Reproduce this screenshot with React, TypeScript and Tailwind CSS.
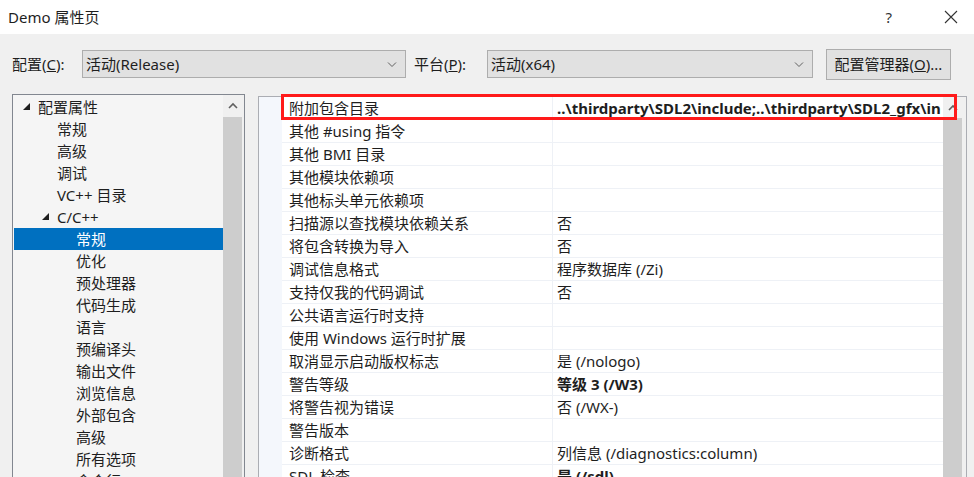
import React from "react";

const font = { fontFamily: '"Noto Sans", "Noto Sans CJK SC", sans-serif' };

const treeItems: { label: string; level: number; expanded?: boolean; selected?: boolean }[] = [
  { label: "配置属性", level: 0, expanded: true },
  { label: "常规", level: 1 },
  { label: "高级", level: 1 },
  { label: "调试", level: 1 },
  { label: "VC++ 目录", level: 1 },
  { label: "C/C++", level: 1, expanded: true },
  { label: "常规", level: 2, selected: true },
  { label: "优化", level: 2 },
  { label: "预处理器", level: 2 },
  { label: "代码生成", level: 2 },
  { label: "语言", level: 2 },
  { label: "预编译头", level: 2 },
  { label: "输出文件", level: 2 },
  { label: "浏览信息", level: 2 },
  { label: "外部包含", level: 2 },
  { label: "高级", level: 2 },
  { label: "所有选项", level: 2 },
  { label: "命令行", level: 2 },
];

const props: { name: string; value: string; bold?: boolean }[] = [
  { name: "附加包含目录", value: "..\\thirdparty\\SDL2\\include;..\\thirdparty\\SDL2_gfx\\include", bold: true },
  { name: "其他 #using 指令", value: "" },
  { name: "其他 BMI 目录", value: "" },
  { name: "其他模块依赖项", value: "" },
  { name: "其他标头单元依赖项", value: "" },
  { name: "扫描源以查找模块依赖关系", value: "否" },
  { name: "将包含转换为导入", value: "否" },
  { name: "调试信息格式", value: "程序数据库 (/Zi)" },
  { name: "支持仅我的代码调试", value: "否" },
  { name: "公共语言运行时支持", value: "" },
  { name: "使用 Windows 运行时扩展", value: "" },
  { name: "取消显示启动版权标志", value: "是 (/nologo)" },
  { name: "警告等级", value: "等级 3 (/W3)", bold: true },
  { name: "将警告视为错误", value: "否 (/WX-)" },
  { name: "警告版本", value: "" },
  { name: "诊断格式", value: "列信息 (/diagnostics:column)" },
  { name: "SDL 检查", value: "是 (/sdl)", bold: true },
];

function Chevron({ className }: { className?: string }) {
  return (
    <svg width="10" height="10" viewBox="0 0 10 10" className={className}>
      <path d="M1 3.5 L5 7.5 L9 3.5" fill="none" stroke="#606060" strokeWidth="1" />
    </svg>
  );
}

function UpArrow() {
  return (
    <svg width="10" height="8" viewBox="0 0 10 8">
      <path d="M1 6 L5 2 L9 6" fill="none" stroke="#606060" strokeWidth="1.6" />
    </svg>
  );
}

function Triangle() {
  return (
    <svg width="8" height="8" viewBox="0 0 8 8">
      <path d="M7 0 L7 7 L0 7 Z" fill="#1e1e1e" />
    </svg>
  );
}

function Combo({ text, width }: { text: string; width: string }) {
  return (
    <div className={`${width} h-[28px] border border-[#adadad] bg-[#e1e1e1] flex items-center justify-between pl-[3px] pr-[8px] text-[15px] text-[#1e1e1e]`}>
      <span>{text}</span>
      <Chevron />
    </div>
  );
}

export default function App() {
  return (
    <div className="w-[974px] h-[477px] overflow-hidden bg-[#f0f0f0] text-[#1e1e1e]" style={font}>
      {/* title bar */}
      <div className="h-[34px] bg-white flex items-center justify-between pl-[8px]">
        <span className="text-[15px]">Demo 属性页</span>
        <div className="flex items-center gap-[52px] pr-[16px]">
          <span className="text-[15px] text-[#333]">?</span>
          <svg width="14" height="14" viewBox="0 0 14 14">
            <path d="M1 1 L13 13 M13 1 L1 13" stroke="#333" strokeWidth="1.1" />
          </svg>
        </div>
      </div>

      {/* toolbar */}
      <div className="h-[60px] flex items-center pl-[12px] text-[15px]">
        <span className="w-[70px]">
          配置(<span className="underline">C</span>):
        </span>
        <Combo text="活动(Release)" width="w-[324px]" />
        <span className="ml-[8px] w-[73px]">
          平台(<span className="underline">P</span>):
        </span>
        <Combo text="活动(x64)" width="w-[326px]" />
        <div className="ml-[13px] w-[125px] h-[31px] border border-[#adadad] bg-[#e1e1e1] flex items-center justify-center">
          配置管理器(<span className="underline">O</span>)...
        </div>
      </div>

      {/* panes */}
      <div className="flex pl-[12px] gap-[13px]">
        {/* tree */}
        <div className="w-[233px] h-[400px] border border-[#828790] bg-[#f5f5f5] flex">
          <div className="flex-1 pt-[1px] pl-[1px] overflow-hidden">
            {treeItems.map((it, i) => (
              <div
                key={i}
                className={`h-[22px] flex items-center text-[15px] ${it.selected ? "bg-[#0070c0] text-white" : ""}`}
              >
                <div className={it.level === 0 ? "w-[9px]" : it.level === 1 ? "w-[28px]" : "w-[47px]"} />
                <div className="w-[10px] flex items-center">{it.expanded ? <Triangle /> : null}</div>
                <span className="ml-[5px]">{it.label}</span>
              </div>
            ))}
          </div>
          <div className="w-[19px] bg-[#f0f0f0] flex flex-col">
            <div className="h-[22px] flex items-center justify-center">
              <UpArrow />
            </div>
            <div className="flex-1 bg-[#cdcdcd]" />
          </div>
          <div className="w-[2px] bg-[#f0f0f0]" />
        </div>

        {/* property grid */}
        <div className="relative w-[709px] h-[400px] mt-[2px] border border-[#abadb3] bg-white flex">
          <div className="w-[23px] bg-[#f4f7fc]" />
          <div className="flex-1 overflow-hidden">
            {props.map((p, i) => (
              <div key={i} className="h-[23px] flex border-b border-[#eef1f6] text-[15px]">
                <div className="w-[271px] border-r border-[#eef1f6] pl-[7px] flex items-center whitespace-nowrap">
                  {p.name}
                </div>
                <div
                  className={`w-[388px] pl-[4px] flex items-center whitespace-nowrap overflow-hidden ${p.bold ? "font-bold" : ""}`}
                >
                  {p.value}
                </div>
              </div>
            ))}
          </div>
          <div className="w-[19px] bg-[#f0f0f0] flex flex-col">
            <div className="h-[21px] flex items-center justify-center">
              <UpArrow />
            </div>
            <div className="flex-1 bg-[#cdcdcd]" />
          </div>
          <div className="w-[4px] bg-[#f0f0f0]" />

          {/* annotation box */}
          <div className="absolute left-[22px] top-[-3px] w-[676px] h-[26px] border-[3px] border-[#ff1a1a] pointer-events-none" />
        </div>
      </div>
    </div>
  );
}
